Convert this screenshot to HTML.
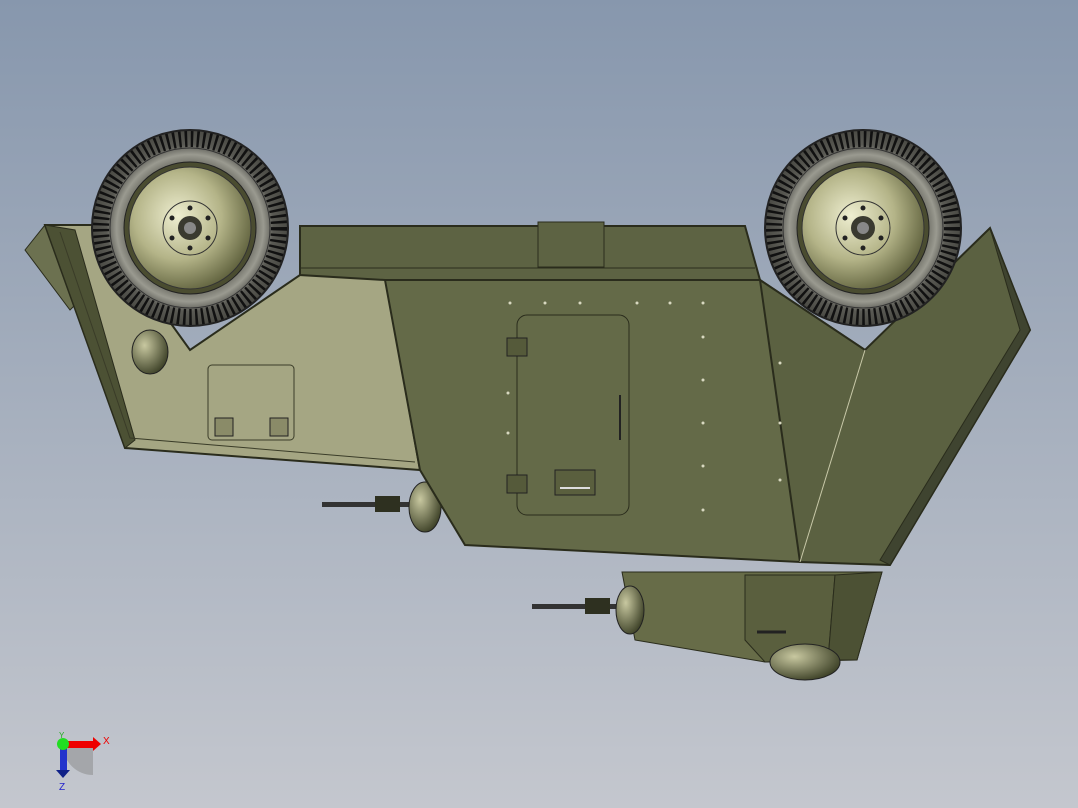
<!DOCTYPE html>
<html><head><meta charset="utf-8"><style>
html,body{margin:0;padding:0;width:1078px;height:808px;overflow:hidden}
body{background:linear-gradient(#8797ad,#c4c7ce)}
</style></head><body>
<svg width="1078" height="808" viewBox="0 0 1078 808" xmlns="http://www.w3.org/2000/svg">
<defs>
<radialGradient id="rim" cx="0.4" cy="0.4" r="0.65"><stop offset="0" stop-color="#eeeed0"/><stop offset="0.55" stop-color="#b4b488"/><stop offset="1" stop-color="#5e603c"/></radialGradient>
<radialGradient id="tire" cx="0.5" cy="0.5" r="0.5"><stop offset="0.6" stop-color="#5a5a52"/><stop offset="0.75" stop-color="#9a9a90"/><stop offset="0.85" stop-color="#5a5a54"/><stop offset="1" stop-color="#4a4a44"/></radialGradient>
<radialGradient id="dome" cx="0.35" cy="0.35" r="0.7"><stop offset="0" stop-color="#c8c8a0"/><stop offset="1" stop-color="#3e4228"/></radialGradient>
<g id="wheel">
<circle r="98" fill="url(#tire)" stroke="#222" stroke-width="2"/>
<circle r="89" fill="none" stroke="#111" stroke-width="16" stroke-dasharray="2.5 3.5"/>
<circle r="80" fill="none" stroke="#333" stroke-width="1"/>
<circle r="66" fill="#4a4c30" stroke="#222"/>
<circle r="61" fill="url(#rim)" stroke="#333"/>
<circle r="27" fill="none" stroke="#333"/>
<circle r="12" fill="#3a3a30"/><circle r="6" fill="#888"/>
<g fill="#222"><circle cx="0" cy="-20" r="2.5"/><circle cx="0" cy="20" r="2.5"/><circle cx="-18" cy="-10" r="2.5"/><circle cx="18" cy="-10" r="2.5"/><circle cx="-18" cy="10" r="2.5"/><circle cx="18" cy="10" r="2.5"/></g>
</g>
</defs>
<!-- lower box -->
<polygon points="622,572 882,572 857,660 765,662 635,640" fill="#676c48" stroke="#2a2c1c"/>
<polygon points="745,575 835,575 828,660 765,662 745,640" fill="#5a5f3e" stroke="#2a2c1c"/>
<polygon points="835,575 882,572 857,660 828,660" fill="#4c5134" stroke="#2a2c1c"/>
<ellipse cx="805" cy="662" rx="35" ry="18" fill="url(#dome)" stroke="#222"/>
<line x1="757" y1="632" x2="786" y2="632" stroke="#222" stroke-width="3"/>
<!-- guns -->
<rect x="532" y="604" width="90" height="5" fill="#333"/><rect x="585" y="598" width="25" height="16" fill="#2e3020"/>
<ellipse cx="630" cy="610" rx="14" ry="24" fill="url(#dome)" stroke="#222"/>
<rect x="322" y="502" width="90" height="5" fill="#333"/><rect x="375" y="496" width="25" height="16" fill="#2e3020"/>
<ellipse cx="425" cy="507" rx="16" ry="25" fill="url(#dome)" stroke="#222"/>
<!-- left fin -->
<polygon points="25,250 45,225 80,300 70,310" fill="#6c7150" stroke="#2a2c1c"/>
<!-- left light panel -->
<polygon points="45,225 100,225 190,350 300,275 385,275 420,470 125,448" fill="#a5a683" stroke="#2a2c1c" stroke-width="2"/>
<polygon points="45,225 75,230 135,440 125,448" fill="#4c5134" stroke="#2a2c1c"/>
<polyline points="60,232 130,438 415,462" fill="none" stroke="#3a3c28"/>
<!-- top strip -->
<polygon points="300,226 745,226 760,280 385,280 300,275" fill="#5d6343" stroke="#2a2c1c" stroke-width="2"/>
<line x1="300" y1="268" x2="755" y2="268" stroke="#2a2c1c"/>
<rect x="538" y="222" width="66" height="45" fill="#5d6343" stroke="#2a2c1c"/>
<!-- center -->
<polygon points="385,280 760,280 865,350 800,562 465,545 420,470" fill="#646a48" stroke="#2a2c1c" stroke-width="2"/>
<!-- right -->
<polygon points="760,280 865,350 990,228 1030,330 890,565 800,562" fill="#5b6141" stroke="#2a2c1c" stroke-width="2"/>
<polygon points="990,228 1030,330 890,565 880,560 1020,330" fill="#3f4430" stroke="#2a2c1c"/>
<line x1="865" y1="350" x2="800" y2="562" stroke="#c8c8a8" stroke-width="1"/>
<!-- door -->
<rect x="517" y="315" width="112" height="200" rx="10" fill="#646a48" stroke="#2a2c1c"/>
<rect x="555" y="470" width="40" height="25" fill="#5a5f3e" stroke="#222"/>
<line x1="560" y1="488" x2="590" y2="488" stroke="#ddd" stroke-width="2"/>
<rect x="507" y="338" width="20" height="18" fill="#555a3a" stroke="#222"/>
<rect x="507" y="475" width="20" height="18" fill="#555a3a" stroke="#222"/>
<line x1="620" y1="395" x2="620" y2="440" stroke="#222" stroke-width="2"/>
<rect x="208" y="365" width="86" height="75" rx="4" fill="#a5a683" stroke="#3a3c28"/>
<rect x="215" y="418" width="18" height="18" fill="#8a8b68" stroke="#222"/>
<rect x="270" y="418" width="18" height="18" fill="#8a8b68" stroke="#222"/>
<ellipse cx="150" cy="352" rx="18" ry="22" fill="url(#dome)" stroke="#222"/>
<!-- rivets -->
<g fill="#d8d8c0">
<circle cx="510" cy="303" r="1.5"/><circle cx="545" cy="303" r="1.5"/><circle cx="580" cy="303" r="1.5"/><circle cx="637" cy="303" r="1.5"/><circle cx="670" cy="303" r="1.5"/><circle cx="703" cy="303" r="1.5"/>
<circle cx="703" cy="337" r="1.5"/><circle cx="703" cy="380" r="1.5"/><circle cx="703" cy="423" r="1.5"/><circle cx="703" cy="466" r="1.5"/><circle cx="703" cy="510" r="1.5"/>
<circle cx="780" cy="363" r="1.5"/><circle cx="780" cy="423" r="1.5"/><circle cx="780" cy="480" r="1.5"/>
<circle cx="508" cy="393" r="1.5"/><circle cx="508" cy="433" r="1.5"/>
</g>
<!-- wheels -->
<use href="#wheel" x="190" y="228"/>
<use href="#wheel" x="863" y="228"/>
<!-- triad -->
<path d="M63,745 A30,30 0 0 0 93,775 L93,745 Z" fill="#888" opacity="0.5"/>
<rect x="63" y="741" width="30" height="7" fill="#e00"/><polygon points="93,737 101,744 93,751" fill="#e00"/>
<rect x="60" y="745" width="7" height="25" fill="#2233cc"/><polygon points="56,770 70,770 63,778" fill="#112288"/>
<circle cx="63" cy="744" r="6" fill="#2d2"/>
<text x="103" y="744" font-family="Liberation Sans,sans-serif" font-size="10" fill="#e00">X</text>
<text x="59" y="790" font-family="Liberation Sans,sans-serif" font-size="10" fill="#22c">Z</text>
<text x="59" y="738" font-family="Liberation Sans,sans-serif" font-size="8" fill="#2a2">Y</text>
</svg>
</body></html>
